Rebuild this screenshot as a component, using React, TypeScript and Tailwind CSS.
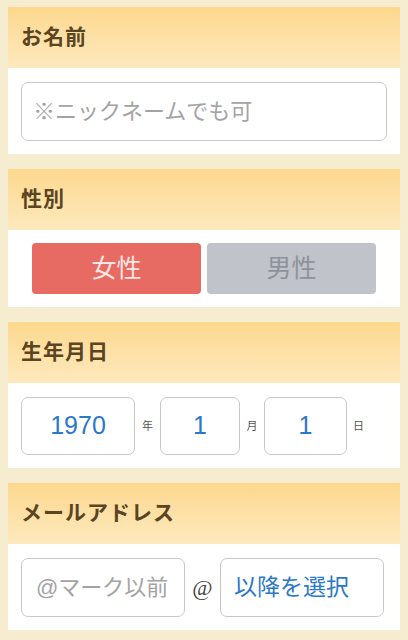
import React from "react";

const jp = { fontFamily: '"Helvetica Neue", "Liberation Sans", "Noto Sans CJK JP", sans-serif' };
const serif = { fontFamily: '"Liberation Serif", "Noto Sans CJK JP", serif' };

function Header({ title }: { title: string }) {
  return (
    <div className="h-[61px] flex items-center pl-[13px] bg-gradient-to-b from-[#fdd88e] to-[#fde9bd]">
      <span className="text-[21px] font-bold text-[#5a4422] tracking-[1px]" style={serif}>
        {title}
      </span>
    </div>
  );
}

export default function App() {
  return (
    <div className="w-[408px] h-[640px] overflow-hidden bg-[#f6ecd0] pt-[7px] px-[8px] flex flex-col gap-[15px]" style={jp}>
      {/* Name */}
      <div className="bg-white">
        <Header title="お名前" />
        <div className="h-[86px] px-[13px] pt-[14px]">
          <div className="h-[59px] rounded-[7px] border border-[#c9c9c9] flex items-center pl-[11px] text-[22px] text-[#a3a3a3]">
            ※ニックネームでも可
          </div>
        </div>
      </div>

      {/* Gender */}
      <div className="bg-white">
        <Header title="性別" />
        <div className="h-[77px] px-[24px] pt-[13px] flex gap-[6px]">
          <div className="w-[169px] h-[51px] rounded-[4px] bg-[#e76a63] flex items-center justify-center text-[25px] text-[#fde6e3]">
            女性
          </div>
          <div className="w-[169px] h-[51px] rounded-[4px] bg-[#c0c4ca] flex items-center justify-center text-[25px] text-[#8e929a]">
            男性
          </div>
        </div>
      </div>

      {/* Birthday */}
      <div className="bg-white">
        <Header title="生年月日" />
        <div className="h-[85px] pl-[13px] pt-[14px] flex items-start">
          <div className="w-[114px] h-[58px] rounded-[7px] border border-[#c9c9c9] flex items-center justify-center text-[25px] text-[#2a78c8]">
            1970
          </div>
          <div className="w-[25px] h-[58px] flex items-center justify-center text-[11px] text-[#555]">年</div>
          <div className="w-[80px] h-[58px] rounded-[7px] border border-[#c9c9c9] flex items-center justify-center text-[25px] text-[#2a78c8]">
            1
          </div>
          <div className="w-[24px] h-[58px] flex items-center justify-center text-[11px] text-[#555]">月</div>
          <div className="w-[83px] h-[58px] rounded-[7px] border border-[#c9c9c9] flex items-center justify-center text-[25px] text-[#2a78c8]">
            1
          </div>
          <div className="w-[23px] h-[58px] flex items-center justify-center text-[11px] text-[#555]">日</div>
        </div>
      </div>

      {/* Email */}
      <div className="bg-white">
        <Header title="メールアドレス" />
        <div className="h-[86px] pl-[13px] pt-[14px] flex items-start">
          <div className="w-[164px] h-[59px] rounded-[7px] border border-[#c9c9c9] flex items-center pl-[14px]">
            <span className="whitespace-nowrap text-[22px] text-[#a3a3a3]">@マーク以前</span>
          </div>
          <div className="w-[35px] h-[59px] flex items-center justify-center text-[22px] text-[#444]" style={serif}>
            @
          </div>
          <div className="w-[164px] h-[59px] rounded-[7px] border border-[#c9c9c9] flex items-center pl-[13px] text-[23px] text-[#2a78c8]">
            以降を選択
          </div>
        </div>
      </div>
    </div>
  );
}
